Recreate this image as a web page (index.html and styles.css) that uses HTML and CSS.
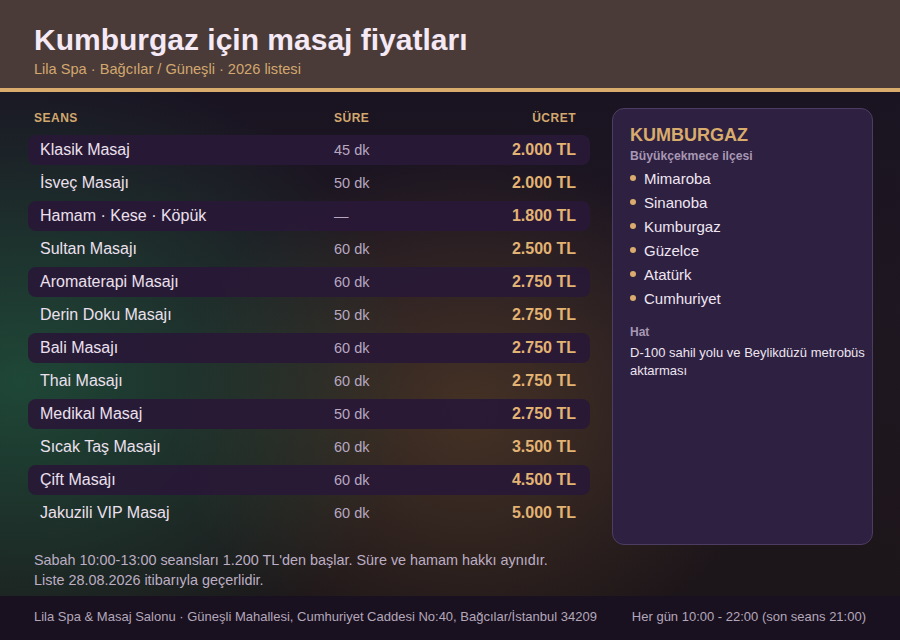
FILE: index.html
```html
<!DOCTYPE html>
<html lang="tr">
<head>
<meta charset="utf-8">
<title>Kumburgaz için masaj fiyatları</title>
<link rel="stylesheet" href="styles.css">
</head>
<body>
<div class="page">
  <header class="top">
    <h1 class="title">Kumburgaz için masaj fiyatları</h1>
    <div class="subtitle">Lila Spa · Bağcılar / Güneşli · 2026 listesi</div>
  </header>
  <main class="main">
    <div class="content">
      <section class="prices">
        <div class="thead">
          <span class="c-name">SEANS</span>
          <span class="c-dur">SÜRE</span>
          <span class="c-price">ÜCRET</span>
        </div>
        <div class="row alt"><span class="c-name">Klasik Masaj</span><span class="c-dur">45 dk</span><span class="c-price">2.000 TL</span></div>
        <div class="row"><span class="c-name">İsveç Masajı</span><span class="c-dur">50 dk</span><span class="c-price">2.000 TL</span></div>
        <div class="row alt"><span class="c-name">Hamam · Kese · Köpük</span><span class="c-dur">—</span><span class="c-price">1.800 TL</span></div>
        <div class="row"><span class="c-name">Sultan Masajı</span><span class="c-dur">60 dk</span><span class="c-price">2.500 TL</span></div>
        <div class="row alt"><span class="c-name">Aromaterapi Masajı</span><span class="c-dur">60 dk</span><span class="c-price">2.750 TL</span></div>
        <div class="row"><span class="c-name">Derin Doku Masajı</span><span class="c-dur">50 dk</span><span class="c-price">2.750 TL</span></div>
        <div class="row alt"><span class="c-name">Bali Masajı</span><span class="c-dur">60 dk</span><span class="c-price">2.750 TL</span></div>
        <div class="row"><span class="c-name">Thai Masajı</span><span class="c-dur">60 dk</span><span class="c-price">2.750 TL</span></div>
        <div class="row alt"><span class="c-name">Medikal Masaj</span><span class="c-dur">50 dk</span><span class="c-price">2.750 TL</span></div>
        <div class="row"><span class="c-name">Sıcak Taş Masajı</span><span class="c-dur">60 dk</span><span class="c-price">3.500 TL</span></div>
        <div class="row alt"><span class="c-name">Çift Masajı</span><span class="c-dur">60 dk</span><span class="c-price">4.500 TL</span></div>
        <div class="row"><span class="c-name">Jakuzili VIP Masaj</span><span class="c-dur">60 dk</span><span class="c-price">5.000 TL</span></div>
      </section>
      <aside class="card">
        <div class="card-title">KUMBURGAZ</div>
        <div class="card-sub">Büyükçekmece ilçesi</div>
        <ul class="hoods">
          <li>Mimaroba</li>
          <li>Sinanoba</li>
          <li>Kumburgaz</li>
          <li>Güzelce</li>
          <li>Atatürk</li>
          <li>Cumhuriyet</li>
        </ul>
        <div class="card-label">Hat</div>
        <div class="card-text">D-100 sahil yolu ve Beylikdüzü metrobüs aktarması</div>
      </aside>
    </div>
    <div class="notes">
      <p>Sabah 10:00-13:00 seansları 1.200 TL'den başlar. Süre ve hamam hakkı aynıdır.</p>
      <p>Liste 28.08.2026 itibarıyla geçerlidir.</p>
    </div>
  </main>
  <footer class="foot">
    <span>Lila Spa &amp; Masaj Salonu · Güneşli Mahallesi, Cumhuriyet Caddesi No:40, Bağcılar/İstanbul 34209</span>
    <span>Her gün 10:00 - 22:00 (son seans 21:00)</span>
  </footer>
</div>
</body>
</html>
```

FILE: styles.css
```css
* { box-sizing: border-box; }
html, body { margin: 0; padding: 0; }
body {
  width: 900px;
  height: 640px;
  overflow: hidden;
  font-family: "Liberation Sans", Arial, sans-serif;
  background: #1b1420;
}
.page {
  width: 900px;
  height: 640px;
  display: flex;
  flex-direction: column;
}
.top {
  background: #4a3b39;
  border-bottom: 4px solid #d9ab6c;
  padding: 24px 34px 10px;
  height: 92px;
  flex: none;
}
.title {
  margin: 0;
  font-size: 30px;
  line-height: 32px;
  font-weight: bold;
  color: #f4e9f4;
}
.subtitle {
  margin-top: 4px;
  font-size: 14.6px;
  line-height: 18px;
  color: #d2a86e;
}
.main {
  flex: 1;
  display: flex;
  flex-direction: column;
  padding: 16px 27px 0 28px;
  background:
    radial-gradient(ellipse 400px 320px at 20px 290px, rgba(30, 90, 64, 0.72), rgba(30, 90, 64, 0) 100%),
    radial-gradient(ellipse 300px 260px at 470px 320px, rgba(100, 72, 42, 0.55), rgba(100, 72, 42, 0) 100%),
    linear-gradient(180deg, #1a1422 0%, #1f1720 50%, #1c1519 100%);
}
.content {
  display: flex;
  gap: 22px;
  align-items: flex-start;
}
.prices {
  width: 562px;
  display: flex;
  flex-direction: column;
  gap: 3px;
}
.thead, .row {
  display: flex;
  align-items: center;
}
.thead {
  height: 20px;
  padding: 0 14px 0 6px;
  font-size: 12px;
  font-weight: bold;
  letter-spacing: 0.5px;
  color: #d2a86e;
  margin-bottom: 4px;
}
.row {
  height: 30px;
  padding: 0 14px 0 12px;
  border-radius: 8px;
  font-size: 16px;
}
.row.alt {
  background: rgba(40, 24, 54, 0.94);
}
.c-name { flex: none; }
.thead .c-name { width: 300px; }
.row .c-name { width: 294px; color: #ece0ee; }
.c-dur { width: 150px; }
.row .c-dur { color: #b7a8c0; font-size: 14.5px; }
.c-price { flex: 1; text-align: right; }
.row .c-price { color: #e3b373; font-weight: bold; }
.card {
  width: 261px;
  height: 437px;
  background: #2d2040;
  border: 1px solid #4d3d62;
  border-radius: 12px;
  padding: 16px 4px 16px 17px;
}
.card-title {
  font-size: 18px;
  font-weight: bold;
  color: #d9ab6c;
  line-height: 20px;
}
.card-sub {
  margin-top: 3px;
  font-size: 12.2px;
  font-weight: bold;
  color: #a897b4;
  line-height: 16px;
}
.hoods {
  list-style: none;
  margin: 2px 0 0;
  padding: 0;
}
.hoods li {
  display: flex;
  align-items: center;
  height: 24px;
  font-size: 15px;
  color: #f0e6f2;
}
.hoods li::before {
  content: "";
  width: 6px;
  height: 6px;
  border-radius: 50%;
  background: #d9ab6c;
  margin-right: 8px;
}
.card-label {
  margin-top: 14px;
  font-size: 12px;
  font-weight: bold;
  color: #a897b4;
  line-height: 16px;
}
.card-text {
  margin-top: 4px;
  font-size: 13px;
  line-height: 18px;
  color: #eee4f0;
}
.notes {
  margin-top: 5px;
  padding-left: 6px;
}
.notes p {
  margin: 0;
  font-size: 14.4px;
  line-height: 20px;
  color: #bcaec4;
}
.foot {
  height: 44px;
  flex: none;
  display: flex;
  justify-content: space-between;
  align-items: center;
  padding: 0 34px 4px;
  background: #1a1120;
  font-size: 13px;
  color: #b3a7ba;
}
```
